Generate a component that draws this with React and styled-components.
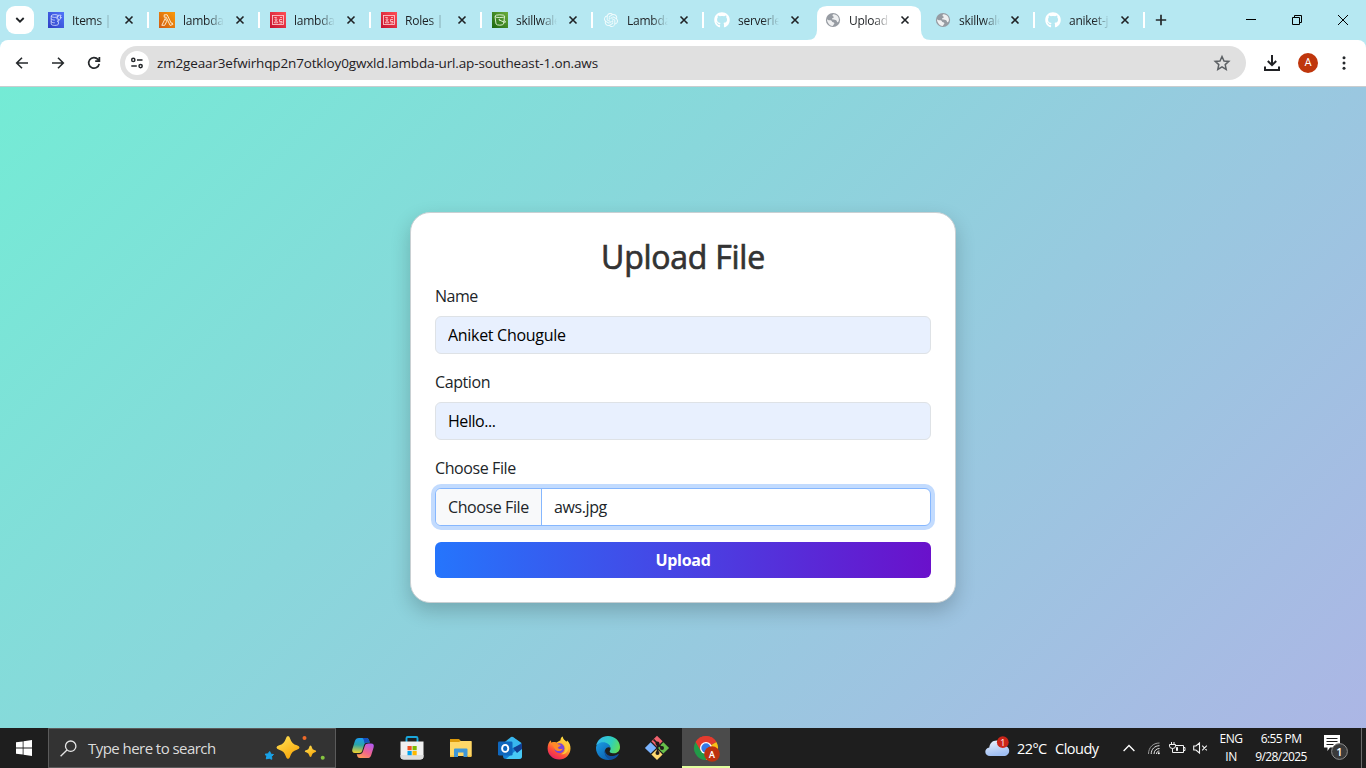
import React from "react";
import styled, { createGlobalStyle, css } from "styled-components";
import { SiOpenai } from "react-icons/si";
import { FaGithub } from "react-icons/fa";

const Global = createGlobalStyle`
  *, *::before, *::after { box-sizing: border-box; }
  html, body { margin: 0; padding: 0; overflow: hidden; }
  body { font-family: "Segoe UI", "Open Sans", "Noto Sans", sans-serif; color: #212529; }
  svg { flex: none; }
`;

const Screen = styled.div`
  display: flex;
  flex-direction: column;
  width: 1366px;
  height: 768px;
  overflow: hidden;
  background: #b6e8f2;
`;

/* ---------- Tab strip ---------- */

const TabStrip = styled.div`
  display: flex;
  height: 40px;
  flex: none;
  background: #b6e8f2;
`;

const TabSearch = styled.button`
  display: flex;
  align-items: center;
  justify-content: center;
  width: 28px;
  height: 28px;
  margin: 6px 4px 6px 6px;
  padding: 0;
  border: 0;
  border-radius: 9px;
  background: #fff;
`;

const TabItem = styled.div`
  position: relative;
  display: flex;
  align-items: center;
  flex: none;
  width: ${(p) => p.$width}px;
  height: 40px;
  padding-left: 10px;
  &::after {
    content: "";
    display: ${(p) => (p.$divider ? "block" : "none")};
    width: 2px;
    height: 16px;
    margin-left: auto;
    background: #fff;
  }
`;

const ActiveShape = styled.svg`
  position: absolute;
  left: -8px;
  top: 6px;
`;

const Favicon = styled.span`
  position: relative;
  display: flex;
  align-items: center;
  justify-content: center;
  width: 16px;
  height: 16px;
  margin-right: 8px;
  color: #fff;
`;

const TabTitle = styled.span`
  position: relative;
  flex: none;
  width: 41px;
  padding-top: 2px;
  white-space: nowrap;
  font-size: 12px;
  line-height: 16px;
  letter-spacing: -0.25px;
  color: #1d2023;
  -webkit-mask-image: linear-gradient(90deg, #000 60%, transparent 100%);
  mask-image: linear-gradient(90deg, #000 60%, transparent 100%);
`;

const TabClose = styled.svg`
  position: relative;
  margin-left: ${(p) => p.$gap}px;
`;

const NewTab = styled.div`
  display: flex;
  align-items: center;
  justify-content: center;
  width: 32px;
`;

const WindowButtons = styled.div`
  display: flex;
  margin-left: auto;
`;

const WindowButton = styled.div`
  display: flex;
  align-items: center;
  justify-content: center;
  width: 46px;
  height: 40px;
`;

/* ---------- Toolbar ---------- */

const Toolbar = styled.div`
  display: flex;
  align-items: center;
  flex: none;
  height: 47px;
  padding: 0 4px;
  background: #fff;
  border-bottom: 1px solid #c9cdcf;
  border-radius: 8px 8px 0 0;
`;

const ToolButton = styled.div`
  display: flex;
  align-items: center;
  justify-content: center;
  flex: none;
  width: 36px;
  height: 36px;
`;

const AddressBar = styled.div`
  display: flex;
  align-items: center;
  flex: none;
  width: 1126px;
  height: 34px;
  margin: 0 8px;
  padding: 0 14px 0 5px;
  border-radius: 17px;
  background: #e0e0e0;
`;

const SiteInfo = styled.div`
  display: flex;
  align-items: center;
  justify-content: center;
  width: 24px;
  height: 24px;
  border-radius: 50%;
  background: #fff;
`;

const Url = styled.span`
  flex: 1;
  margin-left: 8px;
  font-size: 13.5px;
  line-height: 20px;
  letter-spacing: -0.15px;
  color: #1f2124;
`;

const Avatar = styled.span`
  display: flex;
  align-items: center;
  justify-content: center;
  width: 20px;
  height: 20px;
  border-radius: 50%;
  background: #bf360c;
  color: #fff;
  font: 400 11px/20px Roboto, sans-serif;
`;

/* ---------- Page ---------- */

const Page = styled.main`
  display: flex;
  align-items: center;
  justify-content: center;
  flex: none;
  height: 641px;
  background: linear-gradient(135deg, #74ebd5, #acb6e5);
`;

const Card = styled.form`
  width: 546px;
  height: 391px;
  padding: 24px;
  border: 1px solid #c9d0d3;
  border-radius: 20px;
  background: #fff;
  box-shadow: 0 8px 20px rgba(0, 0, 0, 0.2);
`;

const Title = styled.h2`
  margin: 0 0 8px;
  height: 39px;
  font-size: 32px;
  font-weight: 400;
  line-height: 40px;
  letter-spacing: -0.25px;
  text-align: center;
  color: #333;
  -webkit-text-stroke: 0.7px #333;
`;

const Field = styled.div`
  margin-bottom: 16px;
`;

const Label = styled.label`
  display: block;
  height: 24px;
  margin-bottom: 8px;
  font-size: 16px;
  line-height: 24px;
  letter-spacing: ${(p) => p.$spacing || -0.4}px;
`;

const controlBox = css`
  display: flex;
  width: 100%;
  height: 38px;
  border-radius: 6px;
  font-family: inherit;
  font-size: 16px;
  line-height: 24px;
`;

const TextInput = styled.input`
  ${controlBox}
  padding: 6px 12px;
  border: 1px solid #dee2e6;
  outline: 0;
  background: #e8f0fe;
  color: #000;
  letter-spacing: ${(p) => p.$spacing || -0.3}px;
`;

const FilePicker = styled.div`
  ${controlBox}
  overflow: hidden;
  border: 1px solid #86b7fe;
  background: #fff;
  box-shadow: 0 0 0 4px #c2dbfe;
  letter-spacing: -0.4px;
`;

const FileButton = styled.span`
  width: 106px;
  padding: 6px 0 6px 12px;
  border-right: 1px solid #86b7fe;
  background: #f8f9fa;
  white-space: nowrap;
`;

const FileName = styled.span`
  padding: 6px 12px;
`;

const Submit = styled.button`
  display: block;
  width: 100%;
  height: 36px;
  padding: 0;
  border: 0;
  border-radius: 6px;
  background: linear-gradient(90deg, #2575fc, #6a11cb);
  color: #fff;
  font-family: inherit;
  font-size: 16px;
  font-weight: 700;
  line-height: 36px;
  letter-spacing: -0.3px;
`;

/* ---------- Taskbar ---------- */

const Taskbar = styled.footer`
  display: flex;
  flex: none;
  height: 40px;
  background: #1e1e1e;
  color: #fff;
`;

const StartButton = styled.div`
  display: flex;
  align-items: center;
  justify-content: center;
  width: 48px;
`;

const SearchBox = styled.div`
  display: flex;
  align-items: center;
  width: 288px;
  margin-right: 3px;
  padding: 0 9px 0 11px;
  border: 1px solid #5b5b5b;
  background: #333;
`;

const SearchText = styled.span`
  flex: 1;
  margin-left: 11px;
  font-size: 15px;
  letter-spacing: -0.55px;
  color: #dcdcdc;
`;

const AppSlot = styled.div`
  display: flex;
  align-items: center;
  justify-content: center;
  width: 48px;
  margin-right: 1px;
  background: ${(p) => (p.$active ? "#4b4b4b" : "transparent")};
  border-bottom: 2px solid ${(p) => (p.$active ? "#e2ff9f" : "transparent")};
  border-top: 2px solid transparent;
  background-clip: border-box;
`;

const Tray = styled.div`
  display: flex;
  align-items: center;
  margin-left: auto;
  height: 40px;
`;

const Weather = styled.div`
  display: flex;
  align-items: center;
  width: 136px;
  font-size: 14.5px;
  white-space: nowrap;
`;

const Temperature = styled.span`
  width: 38px;
  margin-left: 6px;
  letter-spacing: -0.6px;
`;

const Condition = styled.span`
  letter-spacing: -0.5px;
`;

const TrayIcon = styled.div`
  display: flex;
  align-items: center;
  justify-content: center;
  width: ${(p) => p.$width}px;
`;

const Stack = styled.div`
  display: flex;
  flex-direction: column;
  align-items: center;
  width: ${(p) => p.$width}px;
  font-size: 12px;
  line-height: 18px;
  letter-spacing: ${(p) => p.$spacing}px;
  white-space: nowrap;
`;

const ShowDesktop = styled.div`
  width: 5px;
  height: 40px;
  border-left: 1px solid #6b6b6b;
`;

/* ---------- Icons ---------- */

const DynamoIcon = () => (
  <svg width="16" height="16" viewBox="0 0 16 16" fill="none">
    <defs>
      <linearGradient id="dy" x1="0" y1="1" x2="1" y2="0">
        <stop stopColor="#2e3fc4" />
        <stop offset="1" stopColor="#5075fb" />
      </linearGradient>
    </defs>
    <rect width="16" height="16" fill="url(#dy)" />
    <g stroke="#dfe6ff" strokeWidth="0.8">
      <ellipse cx="6.8" cy="4" rx="3.6" ry="1.4" />
      <path d="M3.2 4v8c0 .8 1.6 1.4 3.6 1.4s3.6-.6 3.6-1.4v-2M3.2 6.7c0 .8 1.6 1.4 3.6 1.4M3.2 9.4c0 .8 1.6 1.4 3.6 1.4" />
      <path d="M10.2 3.2h2.9l-1.1 2.3h1.5L9.6 10l.9-3.1H8.8z" />
    </g>
  </svg>
);

const LambdaIcon = () => (
  <svg width="16" height="16" viewBox="0 0 16 16" fill="none">
    <defs>
      <linearGradient id="la" x1="0" y1="1" x2="1" y2="0">
        <stop stopColor="#cf5c14" />
        <stop offset="1" stopColor="#fb9a08" />
      </linearGradient>
    </defs>
    <rect width="16" height="16" fill="url(#la)" />
    <path
      d="M5.2 2.8h3l4 8.4 1-.3.6 1.6-2.7.9-3.9-8.2H5.2zM6.2 6.5l1.5 2.9-2 3.9H2.8z"
      stroke="#fff3df"
      strokeWidth="0.9"
      strokeLinejoin="round"
    />
  </svg>
);

const IamIcon = () => (
  <svg width="16" height="16" viewBox="0 0 16 16" fill="none">
    <defs>
      <linearGradient id="iam" x1="0" y1="1" x2="1" y2="0">
        <stop stopColor="#c4122f" />
        <stop offset="1" stopColor="#ff4f55" />
      </linearGradient>
    </defs>
    <rect width="16" height="16" fill="url(#iam)" />
    <g stroke="#ffd5d7" strokeWidth="0.8">
      <rect x="2.5" y="3.5" width="11" height="9" />
      <path d="M4.300 5.500h2.500M10 5.500h2M12 7.500H9.500v2H12v1.500H9.500" />
      <circle cx="6" cy="7.600" r="0.9" />
      <path d="M4.400 10.800c0-2.300 3.300-2.300 3.300 0z" />
    </g>
  </svg>
);

const BucketIcon = () => (
  <svg width="16" height="16" viewBox="0 0 16 16" fill="none">
    <defs>
      <linearGradient id="s3" x1="0" y1="1" x2="1" y2="0">
        <stop stopColor="#1b660f" />
        <stop offset="1" stopColor="#6cae3e" />
      </linearGradient>
    </defs>
    <rect width="16" height="16" fill="url(#s3)" />
    <g stroke="#e9f7df" strokeWidth="0.9">
      <ellipse cx="7.8" cy="4.2" rx="4.8" ry="1.4" />
      <path d="M3 4.3l1 7.6c.6 1.7 7 1.7 7.6 0l1-7.6M7.3 8l5 2.2c1.5.6 1.7-.5.1-1.7" />
      <circle cx="7.3" cy="7.8" r="0.4" />
    </g>
  </svg>
);

const GlobeIcon = () => (
  <svg width="16" height="16" viewBox="0 0 16 16">
    <circle cx="8" cy="8" r="7.100" fill="#969ba2" />
    <path
      d="M8.7 2.3C7.2 2.5 7.2 4 8.3 4.5c1 .4.4 1.3-.4 1.4-1.2.2-1 1.3-.2 1.7 1 .5 2.8-.1 3.7.9.7.8.3 1.4 1.1 1.7.6.2 1.3-.9 1.4-1.9.3-2.8-1.6-5.6-5.2-6zM1.9 7.2C2.1 10 4 13.6 7.6 14c.8-.3.5-1.3 1.4-1.8.9-.6.1-1.9-.9-1.9-1.5 0-.9-1.8-2.4-2C4.300 8.100 3 8.300 1.900 7.200z"
      fill="#fff"
      opacity="0.85"
    />
  </svg>
);

const CloseGlyph = ({ gap }) => (
  <TabClose $gap={gap} width="10" height="10" viewBox="0 0 10 10">
    <path d="M1.500 1.500l7 7M8.500 1.500l-7 7" stroke="#1f2225" strokeWidth="1.600" />
  </TabClose>
);

const SparkleIcon = () => (
  <svg width="62" height="28" viewBox="0 0 62 28">
    <defs>
      <linearGradient id="sp" x1="0" y1="0" x2="0.6" y2="1">
        <stop stopColor="#ffe45a" />
        <stop offset="1" stopColor="#f7a80b" />
      </linearGradient>
    </defs>
    <path d="M24 2q1.500 0 2.200 2.700 1.500 5.200 6.700 6.600Q35.500 12 35.500 13.500t-2.600 2.200q-5.200 1.400-6.700 6.600Q25.500 25 24 25t-2.200-2.700q-1.500-5.200-6.700-6.600-2.600-.7-2.600-2.200t2.600-2.200q5.200-1.400 6.700-6.600Q22.500 2 24 2z" fill="url(#sp)" />
    <path d="M46.500 11.500q1 0 1.400 2t2.400 2.500q1.900.4 1.900 1.300t-1.900 1.300q-2 .5-2.400 2.500t-1.400 2-1.400-2-2.400-2.500q-1.900-.4-1.900-1.300t1.900-1.300q2-.5 2.400-2.500t1.400-2z" fill="url(#sp)" />
    <path d="M5.700 17.500l1.200 2.700 2.600.3-1.900 1.900.2 2.900-2.600-1.100-2.900.7.400-2.600-1.500-2.200 2.700-.2z" fill="#19a2e8" stroke="#19a2e8" strokeLinejoin="round" />
    <circle cx="40.500" cy="4" r="2" fill="#ef6a29" />
    <circle cx="58.700" cy="23.800" r="2" fill="#86c440" />
  </svg>
);

const CopilotIcon = () => (
  <svg width="24" height="24" viewBox="0 0 24 24">
    <defs>
      <linearGradient id="c1" x1="0.3" y1="0" x2="0.2" y2="1">
        <stop stopColor="#1b9df0" />
        <stop offset="0.45" stopColor="#2aa5a8" />
        <stop offset="1" stopColor="#f4d42c" />
      </linearGradient>
      <linearGradient id="c2" x1="0.8" y1="0" x2="0.2" y2="1">
        <stop stopColor="#b35af0" />
        <stop offset="0.55" stopColor="#f0648c" />
        <stop offset="1" stopColor="#ff9b55" />
      </linearGradient>
    </defs>
    <path d="M8 2h7.500c1.500 0 2.200 1 2.600 2.400l.7 2.100h-2.300c-2 0-3 1-3.600 3l-1.700 5.300c-.5 1.700-1.400 2.200-2.900 2.200H4c-2.500 0-3.300-1.500-2.600-3.900l2.500-8C4.600 3 5.700 2 8 2z" fill="url(#c1)" />
    <path d="M11.500 2h4c1.500 0 2.200 1 2.600 2.400l.7 2.100h-2.300c-1.300 0-2.300.4-2.900 1.300-.6-2-.4-4.600-2.100-5.800z" fill="#1650c0" />
    <path d="M17.500 7.500H20c2.500 0 3.300 1.500 2.600 3.900l-2.400 7.800C19.500 21.300 18.400 22 16.200 22H8.800c-1.500 0-2.200-.8-2.600-2.200l-.5-1.600h2.600c2 0 3-.8 3.600-2.700l1.900-5.500c.6-1.800 1.700-2.500 3.700-2.500z" fill="url(#c2)" />
  </svg>
);

const StoreIcon = () => (
  <svg width="24" height="26" viewBox="0 0 24 26">
    <path d="M6.500 7V3.200c0-.8.500-1.200 1.200-1.200h8.600c.7 0 1.200.4 1.200 1.200V7" fill="none" stroke="#1aa7dc" strokeWidth="1.900" />
    <path d="M.5 6.500h23V21c0 2.600-1.200 3.500-3.500 3.500H4c-2.300 0-3.500-.9-3.500-3.500z" fill="#f0f0f0" />
    <path d="M.5 20v1c0 2.600 1.200 3.500 3.500 3.500h16c2.300 0 3.500-.9 3.500-3.500v-1z" fill="#dedede" />
    <path d="M7.500 11H11.700v4.200H7.500z" fill="#f05022" />
    <path d="M12.500 11h4.200v4.200h-4.200z" fill="#7fba00" />
    <path d="M7.500 16h4.200v4.200H7.500z" fill="#00a4ef" />
    <path d="M12.500 16h4.200v4.200h-4.200z" fill="#ffb900" />
  </svg>
);

const ExplorerIcon = () => (
  <svg width="22" height="20" viewBox="0 0 22 20">
    <path d="M0 1.500h9l2 2h10.500V18H0z" fill="#f9c84a" />
    <path d="M0 1.500Q0 1 .5 1h8.200l1.800 1.500L9.300 4H0z" fill="#dd9a0b" />
    <path d="M0 4h9.500l1-1h11v15H0z" fill="#ffd767" />
    <path d="M4 19v-7.500q0-1 1-1h11.500q1 0 1 1V19h-4v-4.500H8V19z" fill="#3f97d8" />
    <path d="M0 17.500h4V19H0zM17.500 17.500h4V19h-4z" fill="#f3bd3d" />
  </svg>
);

const OutlookIcon = () => (
  <svg width="24" height="24" viewBox="0 0 24 24">
    <path d="M5 9l9.500-8L24 8v12q0 3-3 3H8q-3 0-3-3z" fill="#1580d5" />
    <path d="M5 7.500L13 1q1-.6 2 0l8.500 6-8 5.500z" fill="#38b7ee" />
    <path d="M24 9v11q0 3-3 3H8z" fill="#47c9f5" />
    <path d="M15 12l9-4.500V13l-5 4z" fill="#123f92" />
    <rect x="0" y="5.500" width="14.500" height="14" rx="1.300" fill="#0f67bd" />
    <ellipse cx="7.200" cy="12.400" rx="3.100" ry="3.500" fill="none" stroke="#fff" strokeWidth="1.900" />
  </svg>
);

const FirefoxIcon = () => (
  <svg width="24" height="24" viewBox="0 0 24 24">
    <defs>
      <linearGradient id="ff" x1="0.85" y1="0" x2="0.25" y2="1">
        <stop stopColor="#fff14a" />
        <stop offset="0.4" stopColor="#ffae2b" />
        <stop offset="0.7" stopColor="#ff5038" />
        <stop offset="1" stopColor="#e51c68" />
      </linearGradient>
    </defs>
    <path d="M13.500 4.200C13.500 2.600 14.300 1 15.700.5c.3 2.500 2 3.600 3.700 5.200l.8-1.200c2.300 2.200 3.500 5 3.300 8.300C23.200 19 18.500 23.500 12.300 23.500 5.800 23.500.6 18.800.6 12.500c0-3.500 1.100-6.200 3-8.200l.9 2.400c1.800-.9 3.500-.9 4.900-.2z" fill="url(#ff)" />
    <circle cx="12.400" cy="12.300" r="5" fill="#7845d8" />
    <path d="M4.500 6.700c2.400-.8 4.600-.5 6.300 1.400.9.700 2.400.6 3 .8-.4 1.500-2.300 1.600-3 2.500 1 2.200 3.300 2 5 1-.8 2.600-4.300 3.600-7 1.800C6.500 12.700 6.800 9 4.500 6.700z" fill="#ff8a26" />
    <path d="M14.200 6.100c2.700 1.200 4.600 4.200 4 7.400-.4 2.400-2.200 4-4.200 4.800 4.500.5 7.500-3.200 7.400-6.600-.1-3.500-2.500-5.600-5.200-6.300z" fill="#ffc738" />
  </svg>
);

const EdgeIcon = () => (
  <svg width="26" height="26" viewBox="0 0 26 26">
    <defs>
      <linearGradient id="e1" x1="0" y1="0.3" x2="1" y2="0.6">
        <stop stopColor="#35b8f1" />
        <stop offset="0.6" stopColor="#2fcfbc" />
        <stop offset="1" stopColor="#62df56" />
      </linearGradient>
      <linearGradient id="e2" x1="0" y1="0" x2="0.8" y2="1">
        <stop stopColor="#1b9de2" />
        <stop offset="1" stopColor="#0b5cae" />
      </linearGradient>
    </defs>
    <path d="M1.200 10.500C2.300 5 7 1 13 1c7 0 12 5.200 12 11 0 4-2.800 6.300-6.200 6.300-3.600 0-4.700-1.500-3.900-2.600.6-.8.800-1.600.6-2.700-.6-3-3.500-4.600-6.800-4.600-3 0-6 .9-7.500 2.100z" fill="url(#e1)" />
    <path d="M1 13c0-3 3-5.700 7-5.700 4.200 0 7 2.500 7.500 5.700-1.500-1.200-4-.7-5.200 1.500-1.700 3.300.6 8.500 6.400 9.800C15.500 25 14.300 25 13 25 6 25 1 19.500 1 13z" fill="url(#e2)" />
    <path d="M10.100 14.500c-.5 3.800 3 7 7.500 6.500 2.300-.2 4.100-1 5.400-1.900.5-.2.900.2.600.7-1.600 2.500-4 4.300-7 4.900-5.200-.6-8.200-6-6.500-10.200z" fill="#11509d" />
  </svg>
);

const GitIcon = () => (
  <svg width="26" height="26" viewBox="0 0 26 26">
    <path d="M13 .8l5.600 5.500L13 11.900 7.400 6.300z" fill="#f1626e" />
    <path d="M6.600 7.200l5.700 5.700-5.700 5.700L.9 12.900z" fill="#7bb4ff" />
    <path d="M19.400 7.200l5.700 5.700-5.700 5.700-5.700-5.700z" fill="#68bf4a" />
    <path d="M13 13.900l5.600 5.600L13 25l-5.600-5.500z" fill="#ffd970" />
    <path d="M9.500 4.500l4 4V18M13.500 9l4.500 4" stroke="#201b19" strokeWidth="1.700" fill="none" />
    <circle cx="13.500" cy="8.600" r="2" fill="#201b19" />
    <circle cx="13.500" cy="18" r="2" fill="#201b19" />
    <circle cx="18" cy="13" r="2" fill="#201b19" />
  </svg>
);

const ChromeIcon = () => (
  <svg width="28" height="28" viewBox="-1 -1 28 28">
    <path d="M13 13L2.600 7A12 12 0 0 1 23.400 7z" fill="#e33b2e" />
    <path d="M13 13l10.400-6A12 12 0 0 1 13 25z" fill="#fbc116" />
    <path d="M13 13v12A12 12 0 0 1 2.600 7z" fill="#229a48" />
    <path d="M2.600 7L7.800 16 13 7h10.400A12 12 0 0 0 2.600 7z" fill="#e33b2e" />
    <circle cx="13" cy="13" r="6" fill="#fff" />
    <circle cx="13" cy="13" r="4.700" fill="#3479e9" />
    <circle cx="19" cy="19" r="7.800" fill="#bd320f" />
    <text x="19" y="22.500" textAnchor="middle" fontFamily="Roboto, sans-serif" fontWeight="500" fontSize="9.500" fill="#fff">A</text>
  </svg>
);

const CloudIcon = () => (
  <svg width="26" height="24" viewBox="0 0 26 24">
    <defs>
      <linearGradient id="cl" x1="0" y1="0" x2="0.300" y2="1">
        <stop stopColor="#eef4ff" />
        <stop offset="1" stopColor="#9fbff3" />
      </linearGradient>
    </defs>
    <path d="M5 20C2.200 20 .3 18.200.3 15.800c0-2.300 1.600-4 4-4.300C4.600 7.300 7.600 4.500 11.500 4.500c3.300 0 6 2 6.900 5.200 3.400-.2 5.800 2 5.800 5 0 3.200-2.300 5.300-5.500 5.300z" fill="url(#cl)" />
    <circle cx="17.800" cy="6.200" r="5.900" fill="#cb2519" />
    <text x="17.800" y="9.500" textAnchor="middle" fontFamily="Open Sans, sans-serif" fontSize="9" fill="#fff">1</text>
  </svg>
);

const WifiIcon = () => (
  <svg width="14" height="14" viewBox="0 0 14 14" fill="none" stroke="#e5e5e5">
    <path d="M1.500 13C1.500 6.500 6 2 12.500 2" stroke="#9c9c9c" />
    <path d="M4.200 13c0-4.800 3.500-8.300 8.300-8.300M7 13c0-3.200 2.300-5.500 5.500-5.500M9.500 13c0-1.800 1.200-3 3-3" />
    <circle cx="11.800" cy="12.200" r="1" fill="#fff" stroke="none" />
  </svg>
);

const BatteryIcon = () => (
  <svg width="17" height="14" viewBox="0 0 17 14" fill="none" stroke="#f2f2f2">
    <path d="M7 4.500h7.500v7H5M14.500 6.500H16v3h-1.500" />
    <path d="M7.500 6.500h1v3h-1z" fill="#fff" />
    <path d="M2.500 1v2.500M5 1v2.500M.5 3.500h6v1.500Q6.500 7.500 3.700 7.500.5 7.500.5 5zM3.500 7.500v4h2" />
  </svg>
);

const VolumeIcon = () => (
  <svg width="15" height="14" viewBox="0 0 15 14" fill="none" stroke="#f2f2f2">
    <path d="M.7 5h2.200l3.600-3v10L2.900 9H.7zM9.200 4.700l4.600 4.600M13.800 4.700L9.200 9.300" strokeWidth="1.100" />
  </svg>
);

const NotificationIcon = () => (
  <svg width="26" height="26" viewBox="0 0 26 26">
    <path d="M1 0h16v12.500H7L4.500 16v-3.500H1z" fill="#fff" />
    <path d="M3.500 3.500h11M3.500 6.500h11M3.500 9.500h7" stroke="#1e1e1e" strokeWidth="1" />
    <circle cx="16.500" cy="16.500" r="7.900" fill="#3a3a3a" stroke="#8d8d8d" />
    <text x="16.500" y="20.500" textAnchor="middle" fontFamily="Open Sans, sans-serif" fontWeight="600" fontSize="11" fill="#fff">1</text>
  </svg>
);

const OpenAiMark = () => <SiOpenai size={14} color="#f4fcfd" />;
const GithubMark = () => <FaGithub size={16} color="#fff" />;

const TABS = [
  { title: "Items | A", icon: DynamoIcon, width: 111 },
  { title: "lambda", icon: LambdaIcon, width: 111 },
  { title: "lambda", icon: IamIcon, width: 111 },
  { title: "Roles | I", icon: IamIcon, width: 111 },
  { title: "skillwale", icon: BucketIcon, width: 111 },
  { title: "Lambda", icon: OpenAiMark, width: 111 },
  { title: "serverle", icon: GithubMark, width: 111, noDivider: true },
  { title: "Upload", icon: GlobeIcon, width: 110, active: true, noDivider: true },
  { title: "skillwale", icon: GlobeIcon, width: 110 },
  { title: "aniket-j", icon: GithubMark, width: 110 },
];

const APPS = [CopilotIcon, StoreIcon, ExplorerIcon, OutlookIcon, FirefoxIcon, EdgeIcon, GitIcon, ChromeIcon];

function Tab({ tab }) {
  const Icon = tab.icon;
  return (
    <TabItem $width={tab.width} $divider={!tab.noDivider}>
      {tab.active && (
        <ActiveShape width="124" height="34" viewBox="0 0 124 34">
          <path d="M0 34Q10 34 10 24V10Q10 0 20 0H104Q114 0 114 10V24Q114 34 124 34Z" fill="#fff" />
        </ActiveShape>
      )}
      <Favicon><Icon /></Favicon>
      <TabTitle>{tab.title}</TabTitle>
      <CloseGlyph gap={tab.width === 110 ? 10 : 11} />
    </TabItem>
  );
}

function BrowserToolbar() {
  return (
    <Toolbar>
      <ToolButton>
        <svg width="16" height="16" viewBox="0 0 16 16" fill="none" stroke="#25282b" strokeWidth="1.600">
          <path d="M14 8H3M8 2.700L2.700 8 8 13.300" />
        </svg>
      </ToolButton>
      <ToolButton>
        <svg width="16" height="16" viewBox="0 0 16 16" fill="none" stroke="#25282b" strokeWidth="1.600">
          <path d="M2 8h11M8 2.700L13.300 8 8 13.300" />
        </svg>
      </ToolButton>
      <ToolButton>
        <svg width="16" height="16" viewBox="0 0 16 16" fill="none" stroke="#25282b" strokeWidth="1.700">
          <path d="M13.200 8.800A5.300 5.300 0 1 1 12 4.400l1.300 1.500M13.400 2v4.200H9.200" />
        </svg>
      </ToolButton>
      <AddressBar>
        <SiteInfo>
          <svg width="14" height="14" viewBox="0 0 14 14" fill="none" stroke="#25282b" strokeWidth="1.500">
            <circle cx="3.300" cy="3.900" r="1.600" />
            <path d="M7 3.900h5.500M1.300 10.100h5.500" />
            <circle cx="10.600" cy="10.100" r="1.600" />
          </svg>
        </SiteInfo>
        <Url>zm2geaar3efwirhqp2n7otkloy0gwxld.lambda-url.ap-southeast-1.on.aws</Url>
        <svg width="20" height="20" viewBox="0 0 20 20" fill="none" stroke="#5c6064" strokeWidth="1.500">
          <path d="M10 3.500l2 4.500 4.800.4-3.600 3.200 1 4.800L10 13.900l-4.200 2.500 1-4.800-3.600-3.200L8 8z" />
        </svg>
      </AddressBar>
      <ToolButton>
        <svg width="18" height="18" viewBox="0 0 18 18" fill="none" stroke="#202124" strokeWidth="2">
          <path d="M9 1v10M4.800 7L9 11.200 13.200 7M2 12.500V16h14v-3.500" />
        </svg>
      </ToolButton>
      <ToolButton><Avatar>A</Avatar></ToolButton>
      <ToolButton>
        <svg width="4" height="16" viewBox="0 0 4 16" fill="#25282b">
          <circle cx="2" cy="2.800" r="1.500" />
          <circle cx="2" cy="8" r="1.500" />
          <circle cx="2" cy="13.200" r="1.500" />
        </svg>
      </ToolButton>
    </Toolbar>
  );
}

export default function App() {
  return (
    <Screen>
      <Global />
      <TabStrip>
        <TabSearch>
          <svg width="10" height="8" viewBox="0 0 10 8" fill="none" stroke="#1f2225" strokeWidth="1.800">
            <path d="M1.300 2L5 5.700 8.700 2" />
          </svg>
        </TabSearch>
        {TABS.map((tab, i) => <Tab key={i} tab={tab} />)}
        <NewTab>
          <svg width="12" height="12" viewBox="0 0 12 12" stroke="#25282b" strokeWidth="1.700">
            <path d="M6 .8v10.400M.8 6h10.400" />
          </svg>
        </NewTab>
        <WindowButtons>
          <WindowButton>
            <svg width="10" height="10" viewBox="0 0 10 10" stroke="#000"><path d="M0 4.500h10" /></svg>
          </WindowButton>
          <WindowButton>
            <svg width="10" height="10" viewBox="0 0 10 10" fill="none" stroke="#000">
              <path d="M.5 2.500h7v7h-7zM2.500 2.500v-2h7v7h-2" />
            </svg>
          </WindowButton>
          <WindowButton>
            <svg width="10" height="10" viewBox="0 0 10 10" stroke="#000"><path d="M0 0l10 10M10 0L0 10" /></svg>
          </WindowButton>
        </WindowButtons>
      </TabStrip>

      <BrowserToolbar />

      <Page>
        <Card onSubmit={(e) => e.preventDefault()}>
          <Title>Upload File</Title>
          <Field>
            <Label $spacing={-0.5}>Name</Label>
            <TextInput readOnly value="Aniket Chougule" />
          </Field>
          <Field>
            <Label>Caption</Label>
            <TextInput readOnly value="Hello..." $spacing={-0.45} />
          </Field>
          <Field>
            <Label>Choose File</Label>
            <FilePicker>
              <FileButton>Choose File</FileButton>
              <FileName>aws.jpg</FileName>
            </FilePicker>
          </Field>
          <Submit>Upload</Submit>
        </Card>
      </Page>

      <Taskbar>
        <StartButton>
          <svg width="16" height="16" viewBox="0 0 16 16" fill="#fff">
            <path d="M0 2.300l6.700-.9v6.200H0zM7.500 1.300L16 0v7.600H7.500zM0 8.400h6.700v6.200L0 13.700zM7.500 8.400H16V16l-8.500-1.200z" />
          </svg>
        </StartButton>
        <SearchBox>
          <svg width="17" height="17" viewBox="0 0 17 17" fill="none" stroke="#e6e6e6" strokeWidth="1.300">
            <circle cx="10.700" cy="6.200" r="5.200" />
            <path d="M7 10L.6 16.300" />
          </svg>
          <SearchText>Type here to search</SearchText>
          <SparkleIcon />
        </SearchBox>
        {APPS.map((Icon, i) => (
          <AppSlot key={i} $active={i === APPS.length - 1}><Icon /></AppSlot>
        ))}
        <Tray>
          <Weather>
            <CloudIcon />
            <Temperature>22°C</Temperature>
            <Condition>Cloudy</Condition>
          </Weather>
          <TrayIcon $width={16}>
            <svg width="12" height="8" viewBox="0 0 12 8" fill="none" stroke="#fff" strokeWidth="1.300">
              <path d="M.6 7L6 1.500 11.400 7" />
            </svg>
          </TrayIcon>
          <TrayIcon $width={34}><WifiIcon /></TrayIcon>
          <TrayIcon $width={12}><BatteryIcon /></TrayIcon>
          <TrayIcon $width={34}><VolumeIcon /></TrayIcon>
          <Stack $width={28} $spacing={-0.5}><span>ENG</span><span>IN</span></Stack>
          <Stack $width={72} $spacing={-0.6}><span>6:55 PM</span><span>9/28/2025</span></Stack>
          <TrayIcon $width={38}><NotificationIcon /></TrayIcon>
          <TrayIcon $width={6} />
          <ShowDesktop />
        </Tray>
      </Taskbar>
    </Screen>
  );
}
